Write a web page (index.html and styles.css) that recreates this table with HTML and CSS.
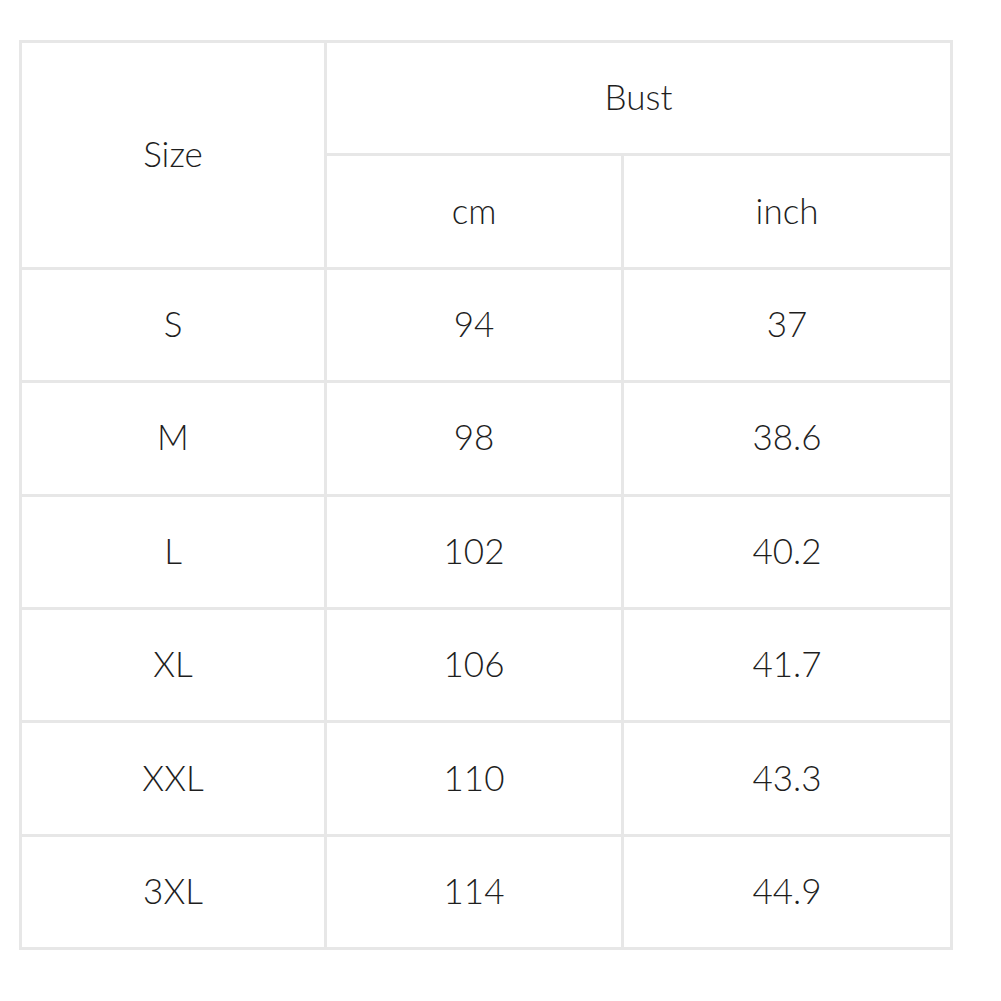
FILE: index.html
```html
<!DOCTYPE html>
<html>
<head>
<meta charset="utf-8">
<link rel="stylesheet" href="styles.css">
</head>
<body>
<table class="size-table">
  <colgroup>
    <col class="col-size">
    <col class="col-cm">
    <col class="col-inch">
  </colgroup>
  <tr>
    <td rowspan="2">Size</td>
    <td colspan="2">Bust</td>
  </tr>
  <tr><td>cm</td><td>inch</td></tr>
  <tr><td>S</td><td>94</td><td>37</td></tr>
  <tr><td>M</td><td>98</td><td>38.6</td></tr>
  <tr><td>L</td><td>102</td><td>40.2</td></tr>
  <tr><td>XL</td><td>106</td><td>41.7</td></tr>
  <tr><td>XXL</td><td>110</td><td>43.3</td></tr>
  <tr><td>3XL</td><td>114</td><td>44.9</td></tr>
</table>
</body>
</html>
```
FILE: styles.css
```css
html, body {
  margin: 0;
  padding: 0;
  background: #ffffff;
}
.size-table {
  margin: 40px 0 0 19px;
  border-collapse: collapse;
  table-layout: fixed;
  width: 931px;
  font-family: Lato, "Open Sans", sans-serif;
  font-size: 35px;
  font-weight: 300;
  color: #1e1e1e;
}
.col-size { width: 305px; }
.col-cm { width: 297px; }
.col-inch { width: 329px; }
.size-table td {
  border: 3px solid #e7e7e7;
  height: 106.4px;
  padding: 0 0 4px 0;
  text-align: center;
  vertical-align: middle;
}
```
